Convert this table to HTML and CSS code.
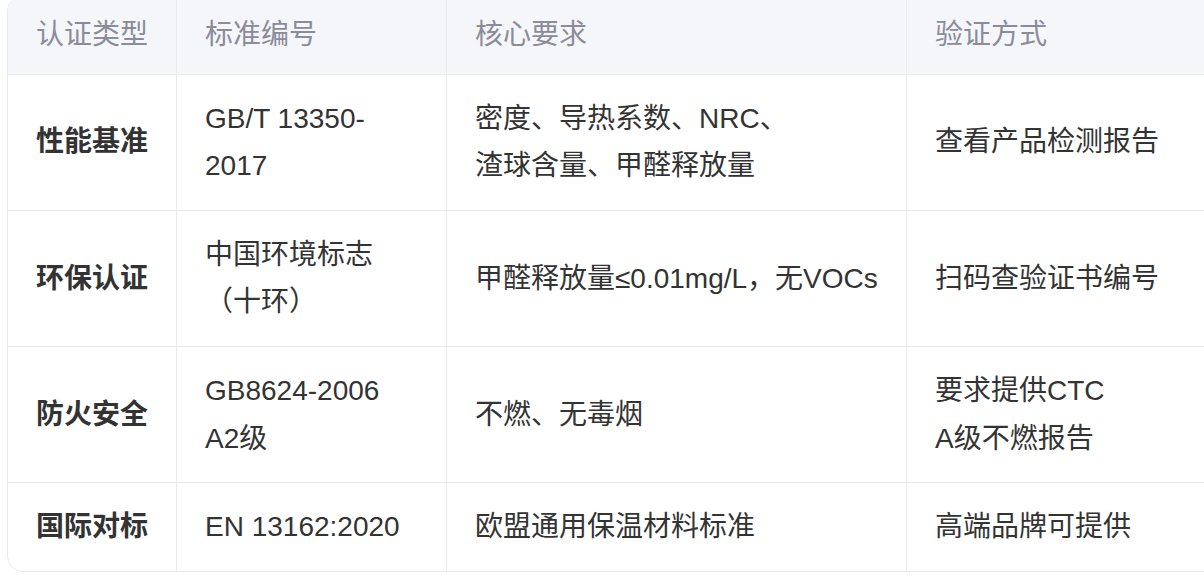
FILE: index.html
```html
<!DOCTYPE html>
<html lang="zh-CN">
<head>
<meta charset="utf-8">
<title>认证标准</title>
<link rel="stylesheet" href="styles.css">
</head>
<body>
<div class="table-wrap">
  <table class="cert-table">
    <colgroup>
      <col class="c1"><col class="c2"><col class="c3"><col class="c4">
    </colgroup>
    <thead>
      <tr>
        <th>认证类型</th>
        <th>标准编号</th>
        <th>核心要求</th>
        <th>验证方式</th>
      </tr>
    </thead>
    <tbody>
      <tr>
        <td class="type">性能基准</td>
        <td>GB/T 13350-2017</td>
        <td>密度、导热系数、NRC、<br>渣球含量、甲醛释放量</td>
        <td>查看产品检测报告</td>
      </tr>
      <tr>
        <td class="type">环保认证</td>
        <td>中国环境标志（十环）</td>
        <td>甲醛释放量≤0.01mg/L，无VOCs</td>
        <td>扫码查验证书编号</td>
      </tr>
      <tr>
        <td class="type">防火安全</td>
        <td>GB8624-2006 A2级</td>
        <td>不燃、无毒烟</td>
        <td>要求提供CTC<br>A级不燃报告</td>
      </tr>
      <tr>
        <td class="type">国际对标</td>
        <td>EN 13162:2020</td>
        <td>欧盟通用保温材料标准</td>
        <td>高端品牌可提供</td>
      </tr>
    </tbody>
  </table>
</div>
</body>
</html>
```

FILE: styles.css
```css
html, body {
  margin: 0;
  padding: 0;
  background: #ffffff;
  overflow: hidden;
}

body {
  font-family: "Liberation Sans", Arial, "Noto Sans CJK SC", sans-serif;
  color: #333333;
}

.table-wrap {
  margin: -5px 0 0 7px;
  width: 1301px;
  border: 1px solid #ebebef;
  border-radius: 16px;
  overflow: hidden;
}

.cert-table {
  width: 1299px;
  table-layout: fixed;
  border-collapse: separate;
  border-spacing: 0;
  font-size: 28px;
  line-height: 1.7;
}

.c1 { width: 169px; }
.c2 { width: 270px; }
.c3 { width: 460px; }
.c4 { width: 400px; }

.cert-table th,
.cert-table td {
  text-align: left;
  vertical-align: middle;
  padding: 20px 28px;
  border-right: 1px solid #ebebef;
  border-bottom: 1px solid #ebebef;
}

.cert-table th:last-child,
.cert-table td:last-child {
  border-right: none;
}

.cert-table tbody tr:last-child td {
  border-bottom: none;
}

.cert-table th {
  background: #f5f6fa;
  color: #8b8b99;
  font-weight: normal;
  padding-top: 15px;
  padding-bottom: 15px;
}

.cert-table td {
  color: #333333;
}

.cert-table td.type {
  font-weight: bold;
}
```
